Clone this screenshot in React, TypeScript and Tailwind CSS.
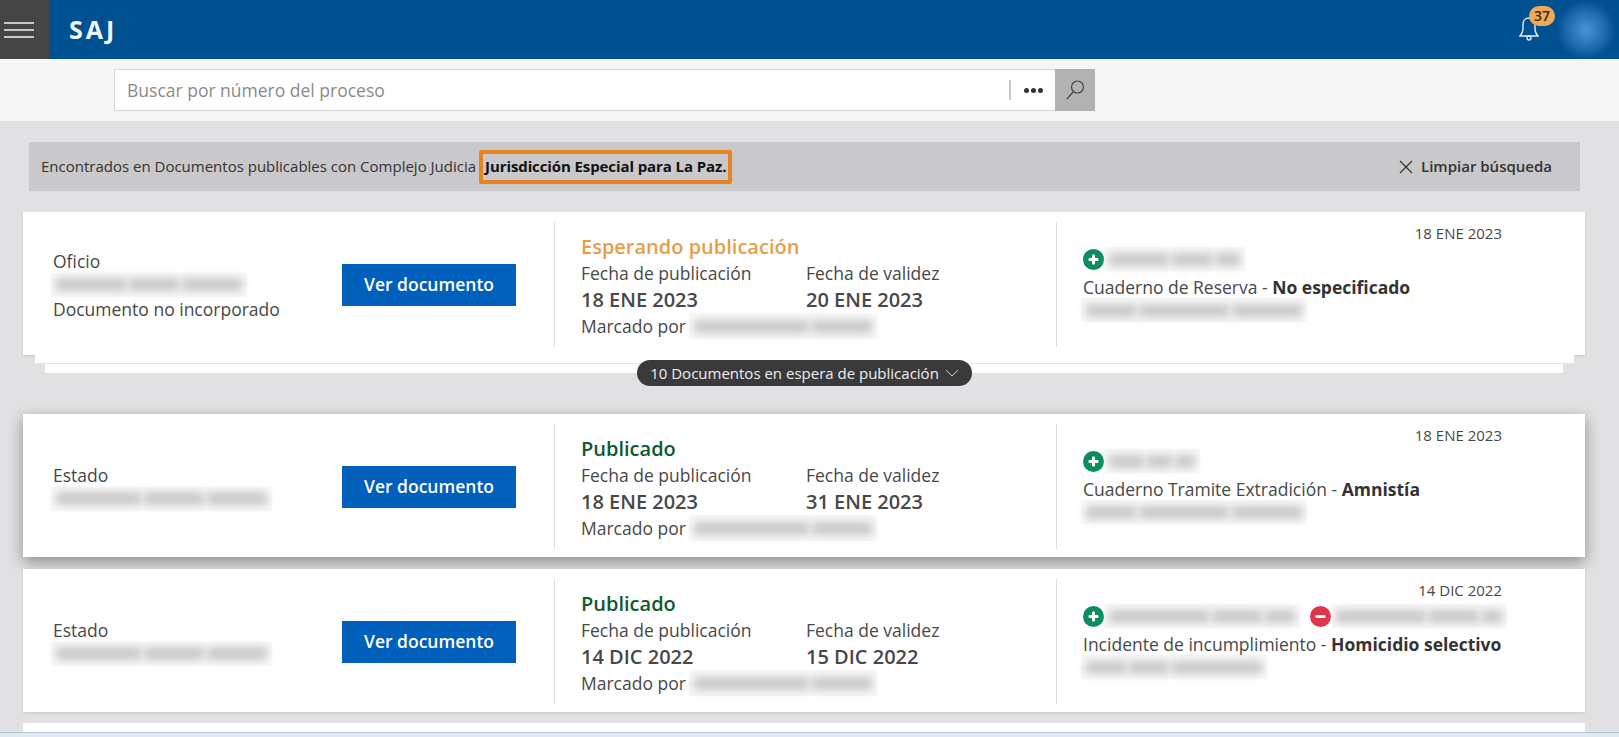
import React from "react";

const font = "font-['Open_Sans','Noto_Sans',sans-serif]";

// the original has these values blurred out, so they stay grey smudges
const Smudge = ({ parts, className = "" }: { parts: number[]; className?: string }) => (
  <div className={`flex h-[24px] items-center gap-[3px] bg-[#f8f8f8] px-[5px] ${className}`}>
    {parts.map((w, i) => (
      <div key={i} style={{ width: w }} className="h-[13px] bg-[#c8c8ca] blur-[4px]" />
    ))}
  </div>
);

const Badge = ({ minus }: { minus?: boolean }) => (
  <svg width="21" height="21" viewBox="0 0 21 21" className="shrink-0">
    <circle cx="10.5" cy="10.5" r="10.5" fill={minus ? "#e0364c" : "#0a8f5c"} />
    <rect x="5.5" y="9" width="10" height="3" rx="1" fill="#fff" />
    {!minus && <rect x="9" y="5.5" width="3" height="10" rx="1" fill="#fff" />}
  </svg>
);

interface CardProps {
  kind: string;
  kindParts: number[];
  note?: string;
  status: string;
  statusColor: string;
  published: string;
  valid: string;
  date: string;
  book: string;
  crime: string;
  whoParts: number[];
  bookParts: number[];
  minus?: boolean;
  raised?: boolean;
}

const DocCard = (p: CardProps) => (
  <div
    className={`relative ml-[23px] flex h-[143px] w-[1562px] bg-white pt-[10px] pb-[8px] ${
      p.raised ? "shadow-[0_5px_14px_rgba(0,0,0,0.38)]" : "shadow-[0_1px_2px_rgba(0,0,0,0.12)]"
    }`}
  >
    <div className="flex w-[531px] shrink-0 items-center pl-[30px]">
      <div className="w-[289px] text-[17.5px] leading-[24px] text-[#484848]">
        <div>{p.kind}</div>
        <Smudge parts={p.kindParts} className="-ml-[2px] w-fit" />
        {p.note && <div>{p.note}</div>}
      </div>
      <button className="h-[42px] w-[174px] bg-[#0060bb] text-[17.5px] font-semibold text-white">
        Ver documento
      </button>
    </div>

    <div className="w-[502px] shrink-0 border-l border-[#dcdcdc] pt-[12px] pl-[26px] text-[17.5px] leading-[26px] text-[#484848]">
      <div className={`text-[20px] font-semibold ${p.statusColor}`}>{p.status}</div>
      <div className="grid grid-cols-[225px_1fr]">
        <div>Fecha de publicación</div>
        <div>Fecha de validez</div>
        <div className="text-[20px] font-semibold leading-[27px]">{p.published}</div>
        <div className="text-[20px] font-semibold leading-[27px]">{p.valid}</div>
      </div>
      <div className="flex items-center">
        <span>Marcado por</span>
        <Smudge parts={[115, 60]} className="ml-[3px] h-[26px]" />
      </div>
    </div>

    <div className="min-w-0 flex-1 border-l border-[#dcdcdc] pl-[26px] text-[17.5px] text-[#484848]">
      <div className="pr-[83px] text-right text-[15px] leading-[22px]">{p.date}</div>
      <div className="mt-[3px] flex h-[24px] items-center">
        <Badge />
        <Smudge parts={p.whoParts} />
        {p.minus && (
          <>
            <span className="w-[10px]" />
            <Badge minus />
            <Smudge parts={[90, 50, 20]} />
          </>
        )}
      </div>
      <div className="mt-[4px] leading-[24px]">
        {p.book} - <b className="font-bold text-[#333]">{p.crime}</b>
      </div>
      <Smudge parts={p.bookParts} className="-ml-[2px] -mt-[1px] w-fit" />
    </div>
  </div>
);

export default function App() {
  return (
    <div className={`flex h-screen w-full flex-col overflow-hidden bg-[#e1e1e3] ${font}`}>
      <header className="flex h-[59px] shrink-0 items-center bg-[#01508f]">
        <div className="flex h-full w-[49px] flex-col justify-center gap-[5px] bg-[#454545] pl-[4px]">
          <span className="h-[2px] w-[30px] bg-[#c8c8c8]" />
          <span className="h-[2px] w-[30px] bg-[#c8c8c8]" />
          <span className="h-[2px] w-[30px] bg-[#c8c8c8]" />
        </div>
        <div className="ml-[20px] text-[25px] font-bold tracking-[3px] text-[#eef5fb]">SAJ</div>
        <div className="relative ml-auto mr-[13px] h-[30px] w-[22px]">
          <svg width="20" height="26" viewBox="0 0 20 26" fill="none" stroke="#dcedfb" strokeWidth="1.4">
            <path d="M1 21 H19 C17 19 16 17 16 14 V9 C16 5 13 3 10 3 C7 3 4 5 4 9 V14 C4 17 3 19 1 21 Z" />
            <circle cx="10" cy="23" r="2" />
          </svg>
          <div className="absolute -top-[9px] left-[10px] flex h-[20px] w-[26px] items-center justify-center rounded-full bg-[#f0a95a] text-[14px] font-semibold text-[#3d2a10]">
            37
          </div>
        </div>
        <div className="mr-[1px] h-[56px] w-[64px] bg-[radial-gradient(circle,#4a94d6_0%,#2470b4_38%,#01508f_70%)]" />
      </header>

      <div className="flex h-[62px] shrink-0 items-center bg-[#f6f6f7] pl-[114px]">
        <div className="flex h-[42px] w-[941px] items-center border border-r-0 border-[#d6d6d6] bg-white pl-[12px]">
          <span className="text-[17.5px] text-[#8a8a8a]">Buscar por número del proceso</span>
          <span className="ml-auto h-[20px] w-[2px] bg-[#c8c8c8]" />
          <span className="flex w-[44px] justify-center gap-[2px]">
            <i className="h-[5px] w-[5px] rounded-full bg-[#333]" />
            <i className="h-[5px] w-[5px] rounded-full bg-[#333]" />
            <i className="h-[5px] w-[5px] rounded-full bg-[#333]" />
          </span>
        </div>
        <div className="flex h-[42px] w-[40px] items-center justify-center bg-[#b2b2b2]">
          <svg width="20" height="22" viewBox="0 0 20 22" fill="none" stroke="#444" strokeWidth="1.2">
            <circle cx="12.5" cy="8" r="6" />
            <path d="M8.5 12.5 L2 20" />
          </svg>
        </div>
      </div>

      <main className="min-h-0 flex-1 overflow-hidden pt-[21px]">
        <div className="ml-[29px] flex h-[49px] w-[1551px] items-center bg-[#c9c8ca] pl-[12px] pr-[28px] text-[15px] text-[#333]">
          <span>Encontrados en Documentos publicables con Complejo Judicia</span>
          <span className="ml-[3px] flex h-[34px] items-center rounded-[2px] border-[4px] border-[#e58420] px-[2px] font-bold tracking-[-0.1px] text-[#111]">
            Jurisdicción Especial para La Paz.
          </span>
          <span className="ml-auto flex items-center gap-[8px] font-semibold">
            <svg width="14" height="14" viewBox="0 0 14 14" stroke="#333" strokeWidth="1.2">
              <path d="M1 1 L13 13 M13 1 L1 13" />
            </svg>
            Limpiar búsqueda
          </span>
        </div>

        <div className="mt-[21px]">
          <DocCard
            kind="Oficio"
            kindParts={[70, 50, 60]}
            note="Documento no incorporado"
            status="Esperando publicación"
            statusColor="text-[#e59f45]"
            published="18 ENE 2023"
            valid="20 ENE 2023"
            date="18 ENE 2023"
            book="Cuaderno de Reserva"
            crime="No especificado"
            whoParts={[60, 40, 25]}
            bookParts={[50, 90, 70]}
          />
          <div className="relative">
            <div className="ml-[35px] h-[9px] w-[1539px] border-b border-[#e6e6e6] bg-white" />
            <div className="ml-[45px] h-[10px] w-[1518px] border-b border-[#dedede] bg-white" />
            <div className="absolute left-[637px] top-[5px] flex h-[26px] w-[335px] items-center justify-center gap-[6px] rounded-full bg-[#3a3a3c] text-[15px] text-[#eee]">
              10 Documentos en espera de publicación
              <svg width="14" height="8" viewBox="0 0 14 8" fill="none" stroke="#ccc">
                <path d="M1 1 L7 7 L13 1" />
              </svg>
            </div>
          </div>
        </div>

        <div className="mt-[40px]">
          <DocCard
            kind="Estado"
            kindParts={[85, 60, 60]}
            status="Publicado"
            statusColor="text-[#0c5a30]"
            published="18 ENE 2023"
            valid="31 ENE 2023"
            date="18 ENE 2023"
            book="Cuaderno Tramite Extradición"
            crime="Amnistía"
            whoParts={[35, 25, 20]}
            bookParts={[50, 90, 70]}
            raised
          />
        </div>
        <div className="mt-[12px]">
          <DocCard
            kind="Estado"
            kindParts={[85, 60, 60]}
            status="Publicado"
            statusColor="text-[#0c5a30]"
            published="14 DIC 2022"
            valid="15 DIC 2022"
            date="14 DIC 2022"
            book="Incidente de incumplimiento"
            crime="Homicidio selectivo"
            whoParts={[100, 50, 30]}
            bookParts={[40, 40, 90]}
            minus
          />
        </div>
        <div className="ml-[23px] mt-[11px] h-[40px] w-[1562px] bg-white" />
      </main>

      <div className="h-[5px] shrink-0 border-t border-[#b9c6d2] bg-[#e2eaf1]" />
    </div>
  );
}
